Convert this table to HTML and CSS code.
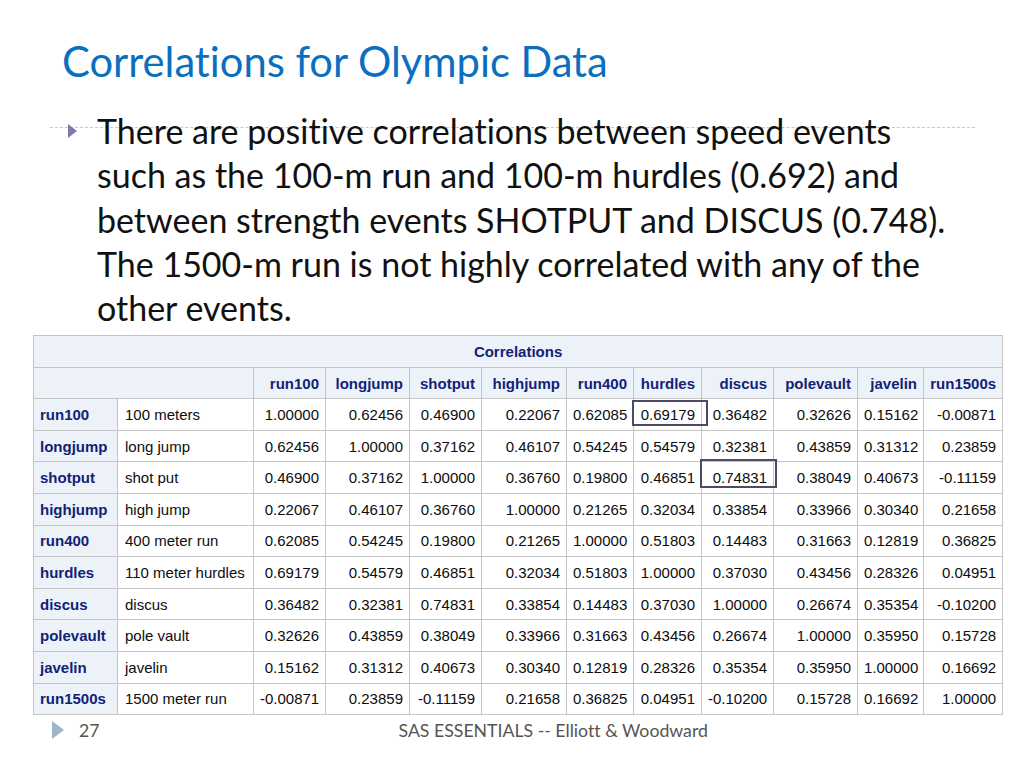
FILE: index.html
```html
<!DOCTYPE html>
<html lang="en">
<head>
<meta charset="utf-8">
<title>Correlations for Olympic Data</title>
<link rel="stylesheet" href="styles.css">
</head>
<body>
<div class="slide">
  <h1 class="title">Correlations for Olympic Data</h1>

  <div class="bullets">
    <div class="rule"></div>
    <div class="item">
      <span class="arrow"></span>
      <p class="text">There are positive correlations between speed events<br>such as the 100-m run and 100-m hurdles (0.692) and<br>between strength events SHOTPUT and DISCUS (0.748).<br>The 1500-m run is not highly correlated with any of the<br>other events.</p>
    </div>
  </div>

  <div class="table-wrap">
    <table class="corr">
      <colgroup>
        <col style="width:84px"><col style="width:136px"><col style="width:72px"><col style="width:84px">
        <col style="width:72px"><col style="width:85px"><col style="width:67px"><col style="width:68px">
        <col style="width:72px"><col style="width:84px"><col style="width:66px"><col style="width:79px">
      </colgroup>
      <thead>
        <tr class="cap"><th colspan="12">Correlations</th></tr>
        <tr class="head">
          <th colspan="2"></th>
          <th>run100</th><th>longjump</th><th>shotput</th><th>highjump</th><th>run400</th>
          <th>hurdles</th><th>discus</th><th>polevault</th><th>javelin</th><th>run1500s</th>
        </tr>
      </thead>
      <tbody>
        <tr><th>run100</th><td class="lbl">100 meters</td><td>1.00000</td><td>0.62456</td><td>0.46900</td><td>0.22067</td><td>0.62085</td><td>0.69179</td><td>0.36482</td><td>0.32626</td><td>0.15162</td><td>-0.00871</td></tr>
        <tr><th>longjump</th><td class="lbl">long jump</td><td>0.62456</td><td>1.00000</td><td>0.37162</td><td>0.46107</td><td>0.54245</td><td>0.54579</td><td>0.32381</td><td>0.43859</td><td>0.31312</td><td>0.23859</td></tr>
        <tr><th>shotput</th><td class="lbl">shot put</td><td>0.46900</td><td>0.37162</td><td>1.00000</td><td>0.36760</td><td>0.19800</td><td>0.46851</td><td>0.74831</td><td>0.38049</td><td>0.40673</td><td>-0.11159</td></tr>
        <tr><th>highjump</th><td class="lbl">high jump</td><td>0.22067</td><td>0.46107</td><td>0.36760</td><td>1.00000</td><td>0.21265</td><td>0.32034</td><td>0.33854</td><td>0.33966</td><td>0.30340</td><td>0.21658</td></tr>
        <tr><th>run400</th><td class="lbl">400 meter run</td><td>0.62085</td><td>0.54245</td><td>0.19800</td><td>0.21265</td><td>1.00000</td><td>0.51803</td><td>0.14483</td><td>0.31663</td><td>0.12819</td><td>0.36825</td></tr>
        <tr><th>hurdles</th><td class="lbl">110 meter hurdles</td><td>0.69179</td><td>0.54579</td><td>0.46851</td><td>0.32034</td><td>0.51803</td><td>1.00000</td><td>0.37030</td><td>0.43456</td><td>0.28326</td><td>0.04951</td></tr>
        <tr><th>discus</th><td class="lbl">discus</td><td>0.36482</td><td>0.32381</td><td>0.74831</td><td>0.33854</td><td>0.14483</td><td>0.37030</td><td>1.00000</td><td>0.26674</td><td>0.35354</td><td>-0.10200</td></tr>
        <tr><th>polevault</th><td class="lbl">pole vault</td><td>0.32626</td><td>0.43859</td><td>0.38049</td><td>0.33966</td><td>0.31663</td><td>0.43456</td><td>0.26674</td><td>1.00000</td><td>0.35950</td><td>0.15728</td></tr>
        <tr><th>javelin</th><td class="lbl">javelin</td><td>0.15162</td><td>0.31312</td><td>0.40673</td><td>0.30340</td><td>0.12819</td><td>0.28326</td><td>0.35354</td><td>0.35950</td><td>1.00000</td><td>0.16692</td></tr>
        <tr><th>run1500s</th><td class="lbl">1500 meter run</td><td>-0.00871</td><td>0.23859</td><td>-0.11159</td><td>0.21658</td><td>0.36825</td><td>0.04951</td><td>-0.10200</td><td>0.15728</td><td>0.16692</td><td>1.00000</td></tr>
      </tbody>
    </table>
    <div class="mark mark-hurdles"></div>
    <div class="mark mark-discus"></div>
  </div>

  <footer class="footer">
    <span class="f-arrow"></span>
    <span class="f-num">27</span>
    <span class="f-text">SAS ESSENTIALS -- Elliott &amp; Woodward</span>
  </footer>
</div>
</body>
</html>
```

FILE: styles.css
```css
html, body {
  margin: 0;
  padding: 0;
  background: #ffffff;
}

.slide {
  position: relative;
  width: 1024px;
  height: 768px;
  overflow: hidden;
  background: #ffffff;
  font-family: Lato, "Open Sans", sans-serif;
  font-variant-ligatures: none;
  font-feature-settings: "liga" 0, "clig" 0;
  display: flex;
  flex-direction: column;
}

.title {
  margin: 0;
  padding: 37px 0 0 62px;
  font-size: 41.7px;
  line-height: 48px;
  font-weight: normal;
  color: #0b6fc0;
}

.bullets {
  position: relative;
  margin-top: 24px;
}

.rule {
  position: absolute;
  left: 50px;
  width: 925px;
  top: 18px;
  border-top: 1px dashed #c8c8c8;
}

.item {
  position: relative;
  display: flex;
  align-items: flex-start;
  padding-left: 68px;
}

.arrow {
  width: 0;
  height: 0;
  margin-top: 15px;
  border-top: 7px solid transparent;
  border-bottom: 7px solid transparent;
  border-left: 9px solid #7b7ba9;
}

.text {
  margin: 0 0 0 20px;
  font-size: 34px;
  line-height: 44.25px;
  color: #111111;
}

.table-wrap {
  position: relative;
  margin: 5px 0 0 33px;
  width: 969px;
}

.corr {
  border-collapse: collapse;
  table-layout: fixed;
  width: 969px;
  font-family: "Liberation Sans", Arial, sans-serif;
  font-size: 15px;
  color: #0d0d0d;
}

.corr th,
.corr td {
  border: 1px solid #c4c4c4;
  padding: 0 6px;
  height: 30.6px;
  white-space: nowrap;
  text-align: right;
}

.corr th {
  background: #edf2f9;
  color: #112277;
  font-weight: bold;
}

.corr .cap th {
  text-align: center;
  height: 31px;
}

.corr .head th {
  height: 30px;
}

.corr tbody th {
  text-align: left;
  padding-left: 6px;
}

.corr td.lbl {
  text-align: left;
  padding-left: 7px;
}

.mark {
  position: absolute;
  border: 2px solid #4b4b66;
}

.mark-hurdles {
  left: 599px;
  top: 65px;
  width: 72px;
  height: 22px;
}

.mark-discus {
  left: 667px;
  top: 124px;
  width: 73px;
  height: 25px;
}

.footer {
  display: flex;
  align-items: center;
  margin-top: 5px;
  padding-left: 52px;
  height: 20px;
  font-family: Lato, "Open Sans", sans-serif;
  font-size: 17.7px;
  color: #555555;
}

.f-arrow {
  width: 0;
  height: 0;
  border-top: 9px solid transparent;
  border-bottom: 9px solid transparent;
  border-left: 12px solid #9fb5cc;
}

.f-num {
  margin-left: 15px;
}

.f-text {
  margin-left: 299px;
}
```
